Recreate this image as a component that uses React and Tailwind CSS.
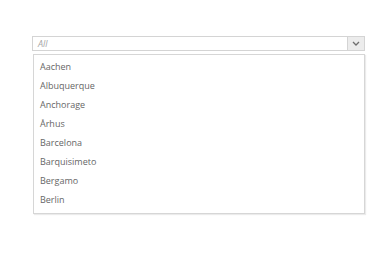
const cities = ['Aachen', 'Albuquerque', 'Anchorage', 'Århus', 'Barcelona', 'Barquisimeto', 'Bergamo', 'Berlin']

export default function App() {
    return (
        <div className="w-[390px] h-[273px] bg-white pt-[36px] pl-[32px]" style={{ fontFamily: '"Open Sans", "Noto Sans", sans-serif' }}>
            <div className="w-[333px]">
                <div className="flex h-[15px] border border-[#d4d4d4] bg-white">
                    <div className="flex-1 flex items-center pl-[5px] text-[9px] italic text-[#a8a8a8] leading-none">All</div>
                    <div className="w-[17px] flex items-center justify-center bg-[#ececec] border-l border-[#d4d4d4]">
                        <svg width="8" height="5" viewBox="0 0 8 5" fill="none">
                            <path d="M1 1 L4 4 L7 1" stroke="#6e6e6e" strokeWidth="1.3" />
                        </svg>
                    </div>
                </div>
                <div className="mt-[3px] ml-[1px] border border-[#d6d6d6] pt-[2px] pb-[4px] shadow-[1px_1px_1px_rgba(0,0,0,0.08)]">
                    {cities.map(c => (
                        <div key={c} className="h-[19px] flex items-center pl-[6px] text-[9px] text-[#666] leading-none">{c}</div>
                    ))}
                </div>
            </div>
        </div>
    )
}
